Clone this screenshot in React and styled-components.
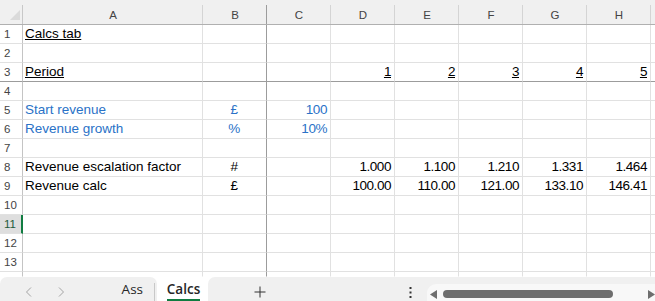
import React from 'react';
import styled, { createGlobalStyle } from 'styled-components';

const GlobalStyle = createGlobalStyle`
  html, body {
    margin: 0;
    padding: 0;
    background: #ffffff;
    overflow: hidden;
  }
`;

const Page = styled.div`
  width: 655px;
  height: 301px;
  display: flex;
  flex-direction: column;
  font-family: "Liberation Sans", Arial, sans-serif;
`;

const Grid = styled.div`
  display: grid;
  grid-template-columns: 23px 180px repeat(7, 64px) 4px;
  grid-template-rows: 25px repeat(13, 19px) 5px;
`;

const Corner = styled.div`
  box-sizing: border-box;
  background:
    linear-gradient(#c8c8c8, #c8c8c8) right 5px / 1px calc(100% - 5px) no-repeat,
    #f0f0f0;
  border-bottom: 1px solid #b0b0b0;
  display: flex;
  justify-content: flex-end;
  align-items: flex-end;
  padding: 0 3px 4px 0;
`;

const ColHead = styled.div`
  box-sizing: border-box;
  background:
    linear-gradient(${p => (p.$freeze ? '#9c9c9c' : '#d4d4d4')}, ${p => (p.$freeze ? '#9c9c9c' : '#d4d4d4')})
      right 5px / ${p => (p.$last ? '0px' : '1px')} calc(100% - 5px) no-repeat,
    #f0f0f0;
  border-bottom: 1px solid #b0b0b0;
  display: flex;
  align-items: center;
  justify-content: center;
  padding-top: 5px;
  font-size: 11.5px;
  color: #444444;
`;

const RowHead = styled.div`
  box-sizing: border-box;
  background: ${p => (p.$active ? '#dedede' : '#ffffff')};
  border-right: ${p => (p.$active ? '2px solid #107c41' : '1px solid #c4c4c4')};
  border-bottom: 1px solid ${p => (p.$freeze ? '#9c9c9c' : p.$end ? 'transparent' : '#e1e1e1')};
  display: flex;
  align-items: center;
  padding-left: 4px;
  font-size: 11.5px;
  color: ${p => (p.$active ? '#1d5a3a' : '#444444')};
  overflow: hidden;
`;

const Cell = styled.div`
  box-sizing: border-box;
  border-right: 1px solid ${p => (p.$freeze ? '#9c9c9c' : p.$last ? 'transparent' : '#e1e1e1')};
  border-bottom: 1px solid ${p => (p.$freezeRow ? '#9c9c9c' : p.$end ? 'transparent' : '#e1e1e1')};
  padding: 0 3px 0 2px;
  text-align: ${p => p.$align || 'left'};
  color: ${p => (p.$blue ? '#2a72c7' : '#000000')};
  font-size: 13.5px;
  letter-spacing: ${p => (p.$num ? '-0.45px' : '0')};
  line-height: 18px;
  white-space: nowrap;
  overflow: visible;
  text-decoration: ${p => (p.$u ? 'underline' : 'none')};
  text-underline-offset: 1px;
`;

const TabBar = styled.div`
  height: 24px;
  display: flex;
  background: #ffffff;
`;

const LeftPanel = styled.div`
  width: 157px;
  background: #f0f0f0;
  border-radius: 7px 7px 0 0;
  display: flex;
  align-items: center;
  padding-top: 5px;
  box-sizing: border-box;
`;

const NavButton = styled.div`
  width: 32px;
  display: flex;
  justify-content: center;
  &:first-child {
    margin-left: 13px;
  }
`;

const SheetTab = styled.div`
  font-family: "Open Sans", "Liberation Sans", sans-serif;
  font-size: 13.5px;
  color: #262626;
  font-weight: ${p => (p.$active ? 600 : 400)};
  line-height: 17px;
  padding-bottom: 1px;
  border-bottom: 2px solid ${p => (p.$active ? '#107c41' : 'transparent')};
`;

const OtherTab = styled.div`
  margin-left: auto;
  margin-right: 2px;
  align-self: flex-end;
  height: 18px;
  display: flex;
  align-items: center;
  padding: 0 11px 2px 0;
  border-right: 1px solid #c8c8c8;
  box-sizing: border-box;
`;

const ActiveTab = styled.div`
  width: 51px;
  display: flex;
  justify-content: center;
  align-items: flex-end;
  padding-left: 2px;
  box-sizing: border-box;
`;

const RightPanel = styled.div`
  flex: 1;
  background: #f0f0f0;
  border-radius: 7px 0 0 0;
  display: flex;
  align-items: center;
`;

const PlusButton = styled.div`
  width: 103px;
  display: flex;
  justify-content: center;
  padding-top: 6px;
`;

const Grow = styled.div`
  flex: 1;
`;

const Dots = styled.div`
  width: 13px;
  display: flex;
  justify-content: center;
  padding-top: 6px;
`;

const Track = styled.div`
  flex: 0 0 228px;
  height: 17px;
  margin-left: 10px;
  align-self: flex-end;
  background: #f8f8f8;
  border-radius: 9px 0 0 0;
  display: grid;
  grid-template-columns: 7px 170px 1fr 7px;
  column-gap: 6px;
  align-items: center;
  padding: 3px 0 0 3px;
  box-sizing: border-box;
`;

const Thumb = styled.div`
  height: 8px;
  border-radius: 4px;
  background: #6e6e6e;
`;

const Arrow = styled.svg`
  display: block;
`;

const cols = ['A', 'B', 'C', 'D', 'E', 'F', 'G', 'H', ''];

const data = {
  1: { A: { v: 'Calcs tab', u: true } },
  3: {
    A: { v: 'Period', u: true },
    D: { v: '1', u: true, align: 'right', num: true },
    E: { v: '2', u: true, align: 'right', num: true },
    F: { v: '3', u: true, align: 'right', num: true },
    G: { v: '4', u: true, align: 'right', num: true },
    H: { v: '5', u: true, align: 'right', num: true },
  },
  5: {
    A: { v: 'Start revenue', blue: true },
    B: { v: '£', blue: true, align: 'center', num: true },
    C: { v: '100', blue: true, align: 'right', num: true },
  },
  6: {
    A: { v: 'Revenue growth', blue: true },
    B: { v: '%', blue: true, align: 'center', num: true },
    C: { v: '10%', blue: true, align: 'right', num: true },
  },
  8: { A: { v: 'Revenue escalation factor' }, B: { v: '#', align: 'center', num: true } },
  9: { A: { v: 'Revenue calc' }, B: { v: '£', align: 'center', num: true } },
};

const factors = ['1.000', '1.100', '1.210', '1.331', '1.464'];
const calcs = ['100.00', '110.00', '121.00', '133.10', '146.41'];
['D', 'E', 'F', 'G', 'H'].forEach((c, i) => {
  data[8][c] = { v: factors[i], align: 'right', num: true };
  data[9][c] = { v: calcs[i], align: 'right', num: true };
});

const rowNums = Array.from({ length: 14 }, (_, i) => i + 1);

const Chevron = ({ dir }) => (
  <svg width="8" height="10" viewBox="0 0 8 10">
    <polyline
      points={dir === 'left' ? '6,0.5 1.5,5 6,9.5' : '2,0.5 6.5,5 2,9.5'}
      fill="none"
      stroke="#a3a3a3"
      strokeWidth="1"
    />
  </svg>
);

export default function App() {
  return (
    <Page>
      <GlobalStyle />
      <Grid>
        <Corner>
          <svg width="10" height="10" viewBox="0 0 10 10">
            <polygon points="10,0 10,10 0,10" fill="#dadada" />
          </svg>
        </Corner>
        {cols.map((c, i) => (
          <ColHead key={'h' + i} $freeze={c === 'B'} $last={c === ''}>
            {c}
          </ColHead>
        ))}
        {rowNums.map(r => (
          <React.Fragment key={r}>
            <RowHead $active={r === 11} $freeze={r === 3} $end={r === 14}>
              {r < 14 ? r : ''}
            </RowHead>
            {cols.map((c, i) => {
              const cell = (data[r] && data[r][c]) || {};
              return (
                <Cell
                  key={r + '-' + i}
                  $freeze={c === 'B'}
                  $last={c === ''}
                  $freezeRow={r === 3}
                  $end={r === 14}
                  $align={cell.align}
                  $blue={cell.blue}
                  $num={cell.num}
                  $u={cell.u}
                >
                  {cell.v}
                </Cell>
              );
            })}
          </React.Fragment>
        ))}
      </Grid>
      <TabBar>
        <LeftPanel>
          <NavButton>
            <Chevron dir="left" />
          </NavButton>
          <NavButton>
            <Chevron dir="right" />
          </NavButton>
          <OtherTab>
            <SheetTab>Ass</SheetTab>
          </OtherTab>
        </LeftPanel>
        <ActiveTab>
          <SheetTab $active>Calcs</SheetTab>
        </ActiveTab>
        <RightPanel>
          <PlusButton>
            <svg width="12" height="12" viewBox="0 0 12 12">
              <path d="M6 0.5V11.5M0.5 6H11.5" stroke="#333333" strokeWidth="1" />
            </svg>
          </PlusButton>
          <Grow />
          <Dots>
            <svg width="3" height="11" viewBox="0 0 3 11">
              <rect x="0.5" y="0" width="2" height="2" fill="#333333" />
              <rect x="0.5" y="4.5" width="2" height="2" fill="#333333" />
              <rect x="0.5" y="9" width="2" height="2" fill="#333333" />
            </svg>
          </Dots>
          <Track>
            <Arrow width="7" height="9" viewBox="0 0 7 9">
              <polygon points="7,0 7,9 0,4.5" fill="#6e6e6e" />
            </Arrow>
            <Thumb />
            <span />
            <Arrow width="7" height="9" viewBox="0 0 7 9">
              <polygon points="0,0 0,9 7,4.5" fill="#6e6e6e" />
            </Arrow>
          </Track>
        </RightPanel>
      </TabBar>
    </Page>
  );
}
